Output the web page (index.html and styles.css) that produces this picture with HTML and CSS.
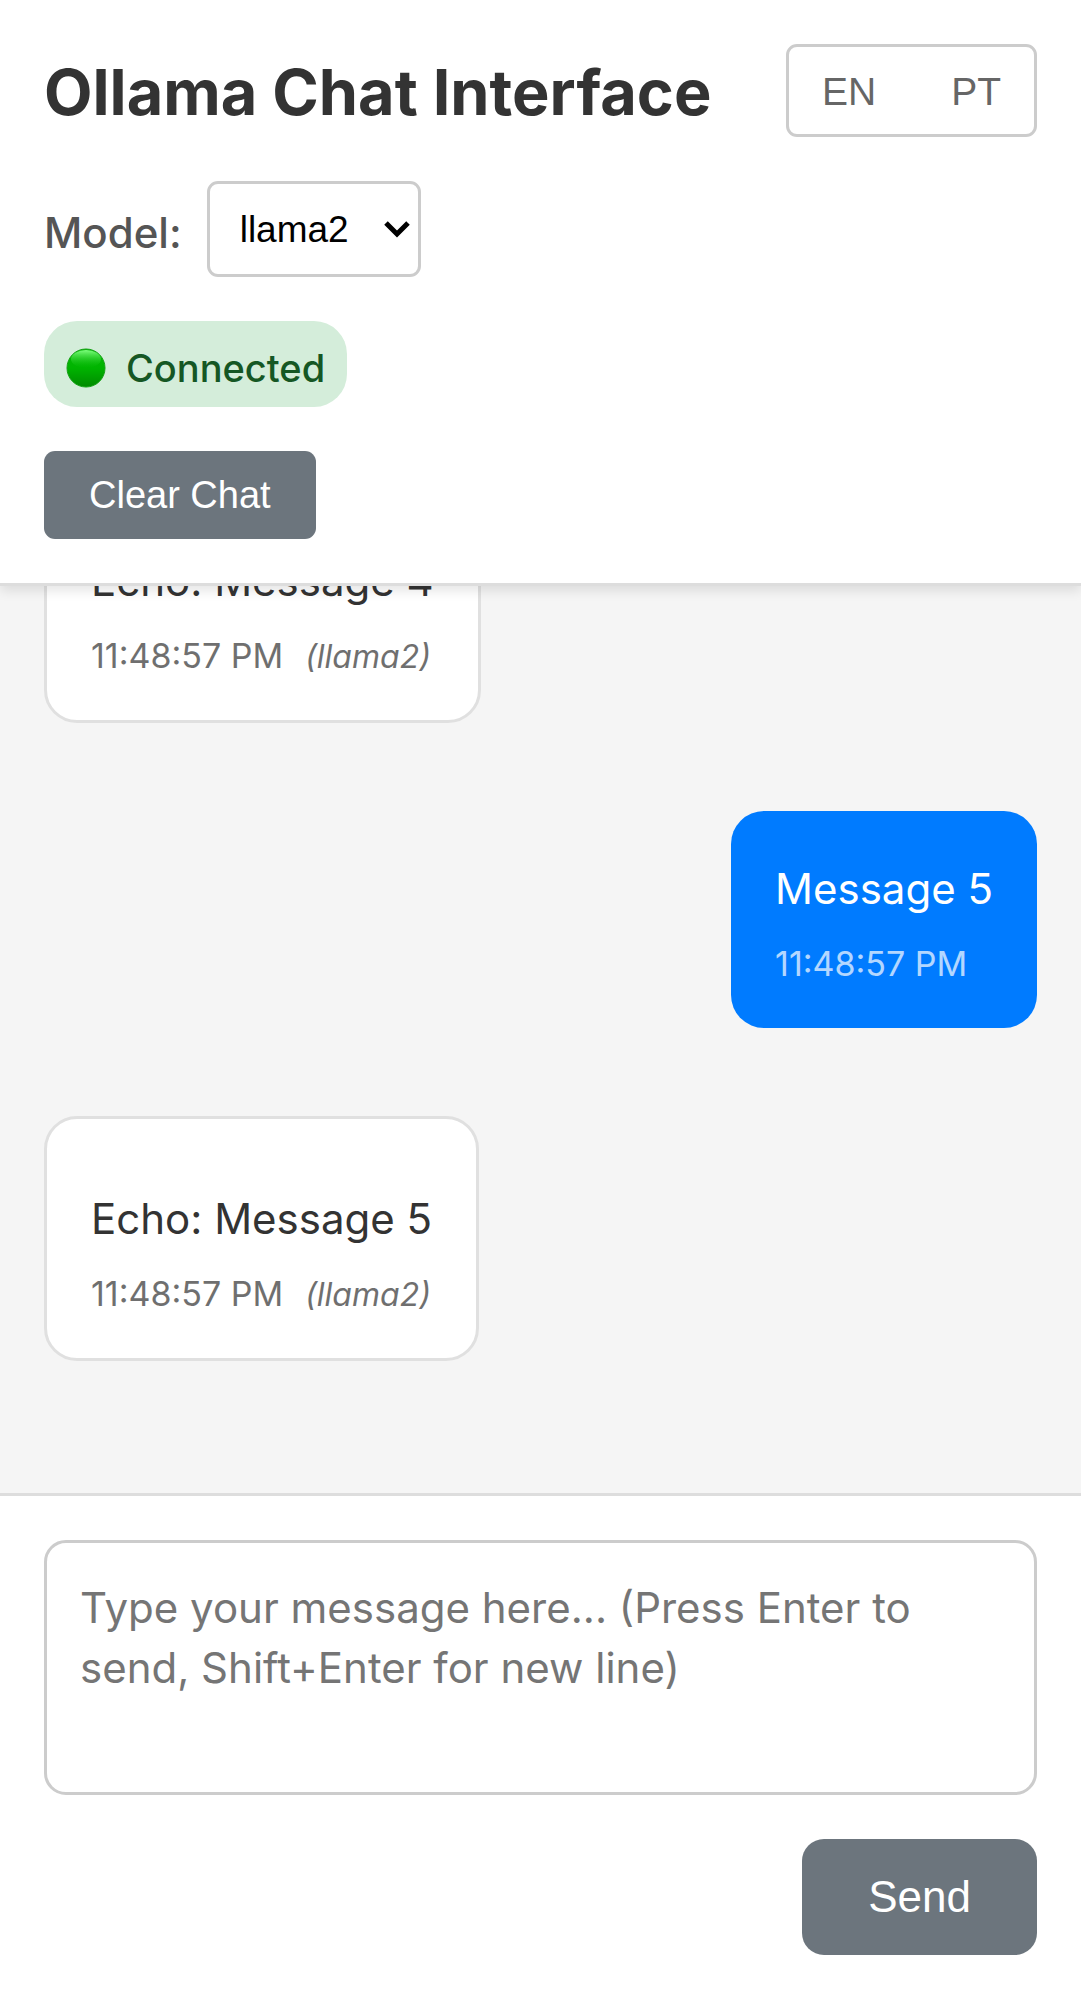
FILE: index.html
```html
<!DOCTYPE html>
<html lang="en">
<head>
  <meta charset="utf-8">
  <meta name="viewport" content="width=device-width, initial-scale=1">
  <title>Ollama Chat Interface</title>
  <link rel="stylesheet" href="styles.css">
</head>
<body>
  <header class="header">
    <div class="title-row">
      <h1 class="title">Ollama Chat Interface</h1>
      <div class="languages">
        <button class="language" type="button">EN</button>
        <button class="language" type="button">PT</button>
      </div>
    </div>
    <div class="model-row">
      <label class="model-label" for="model">Model:</label>
      <div class="select-wrap">
        <select class="model-select" id="model">
          <option>llama2</option>
        </select>
        <svg class="chevron" viewBox="0 0 28 18" aria-hidden="true">
          <path d="M3 3 14 14 25 3" fill="none" stroke="#000" stroke-width="5"/>
        </svg>
      </div>
    </div>
    <div class="status">
      <svg class="status-dot" viewBox="0 0 40 40" aria-hidden="true">
        <defs>
          <linearGradient id="dot" x1="0" y1="0" x2="0" y2="1">
            <stop offset="0" stop-color="#08b808"/>
            <stop offset="0.5" stop-color="#00b400"/>
            <stop offset="1" stop-color="#008a00"/>
          </linearGradient>
          <linearGradient id="shine" x1="0" y1="0" x2="0" y2="1">
            <stop offset="0" stop-color="#7dff7d"/>
            <stop offset="1" stop-color="#10c010" stop-opacity="0"/>
          </linearGradient>
        </defs>
        <circle cx="20" cy="20" r="19" fill="url(#dot)" stroke="#12a012"/>
        <ellipse cx="20" cy="11" rx="15" ry="9" fill="url(#shine)"/>
      </svg>
      <span>Connected</span>
    </div>
    <button class="clear" type="button">Clear Chat</button>
  </header>

  <main class="messages">
    <article class="message reply">
      <p class="text">Echo: Message 4</p>
      <p class="meta"><time>11:48:57 PM</time><em class="model-name">(llama2)</em></p>
    </article>
    <article class="message sent">
      <p class="text">Message 5</p>
      <p class="meta"><time>11:48:57 PM</time></p>
    </article>
    <article class="message reply">
      <p class="text">Echo: Message 5</p>
      <p class="meta"><time>11:48:57 PM</time><em class="model-name">(llama2)</em></p>
    </article>
  </main>

  <form class="composer">
    <textarea class="input" aria-label="Message" placeholder="Type your message here... (Press Enter to send, Shift+Enter for new line)"></textarea>
    <button class="send" type="button">Send</button>
  </form>
</body>
</html>
```
FILE: styles.css
```css
* {
  box-sizing: border-box;
}

body {
  margin: 0;
  height: 100vh;
  display: flex;
  flex-direction: column;
  background: #f5f5f5;
  color: #333;
  font-family: Inter, "Liberation Sans", sans-serif;
  font-size: 42px;
}

button,
select {
  font-family: "Liberation Sans", Arial, sans-serif;
}

.header {
  position: relative;
  z-index: 1;
  flex: none;
  display: flex;
  flex-direction: column;
  align-items: flex-start;
  gap: 44px;
  padding: 44px;
  background: #fff;
  border-bottom: 3px solid #ddd;
  box-shadow: 0 5px 11px rgba(0, 0, 0, 0.1);
}

.title-row {
  align-self: stretch;
  display: flex;
  align-items: center;
  justify-content: space-between;
}

.title {
  margin: 0;
  padding-top: 3px;
  font-size: 63px;
  font-weight: 700;
  line-height: 90px;
  white-space: nowrap;
}

.languages {
  display: flex;
  gap: 9px;
  border: 3px solid #ccc;
  border-radius: 11px;
}

.language {
  padding: 3px 33px 0;
  border: 0;
  background: none;
  color: #666;
  font-size: 39px;
  line-height: 84px;
}

.model-row {
  display: flex;
  align-items: center;
  gap: 25px;
}

.model-label {
  padding-top: 6px;
  color: #555;
  font-weight: 500;
}

.select-wrap {
  position: relative;
}

.model-select {
  appearance: none;
  display: block;
  width: 214px;
  height: 96px;
  padding: 0 30px;
  border: 3px solid #ccc;
  border-radius: 11px;
  background: #fff;
  color: #000;
  font-size: 37px;
}

.chevron {
  position: absolute;
  right: 10px;
  top: 39px;
  width: 28px;
  height: 18px;
  pointer-events: none;
}

.status {
  display: flex;
  align-items: center;
  gap: 20px;
  padding: 8px 22px 0;
  border-radius: 33px;
  background: #d4edda;
  color: #155724;
  font-size: 38px;
  font-weight: 500;
  line-height: 78px;
}

.status-dot {
  width: 40px;
  height: 40px;
}

.clear {
  padding: 0 45px;
  border: 0;
  border-radius: 11px;
  background: #6c757d;
  color: #fff;
  font-size: 38px;
  line-height: 88px;
}

.messages {
  flex: 1;
  min-height: 0;
  overflow: hidden;
  display: flex;
  flex-direction: column;
  justify-content: flex-end;
  gap: 88px;
  padding: 44px 44px 132px;
}

.message {
  flex: none;
  max-width: 80%;
  padding: 44px;
  border-radius: 33px;
}

.reply {
  align-self: flex-start;
  padding-top: 66px;
  border: 3px solid #e0e0e0;
  background: #fff;
}

.sent {
  align-self: flex-end;
  background: #007bff;
  color: #fff;
}

.text {
  margin: 0 0 21px;
  line-height: 68px;
}

.meta {
  display: flex;
  align-items: baseline;
  gap: 22px;
  margin: 0;
  font-size: 34px;
  line-height: 40px;
  opacity: 0.7;
}

.model-name {
  font-size: 32px;
  line-height: 36px;
}

.composer {
  flex: none;
  display: flex;
  flex-direction: column;
  align-items: flex-end;
  gap: 44px;
  padding: 44px;
  background: #fff;
  border-top: 3px solid #ddd;
}

.input {
  display: block;
  width: 100%;
  height: 255px;
  padding: 35px 33px 33px;
  border: 3px solid #ccc;
  border-radius: 22px;
  background: #fff;
  font: inherit;
  line-height: 60px;
  resize: none;
}

.input::placeholder {
  color: #757575;
}

.send {
  padding: 0 66px;
  border: 0;
  border-radius: 22px;
  background: #6c757d;
  color: #fff;
  font-size: 44px;
  line-height: 116px;
}
```
